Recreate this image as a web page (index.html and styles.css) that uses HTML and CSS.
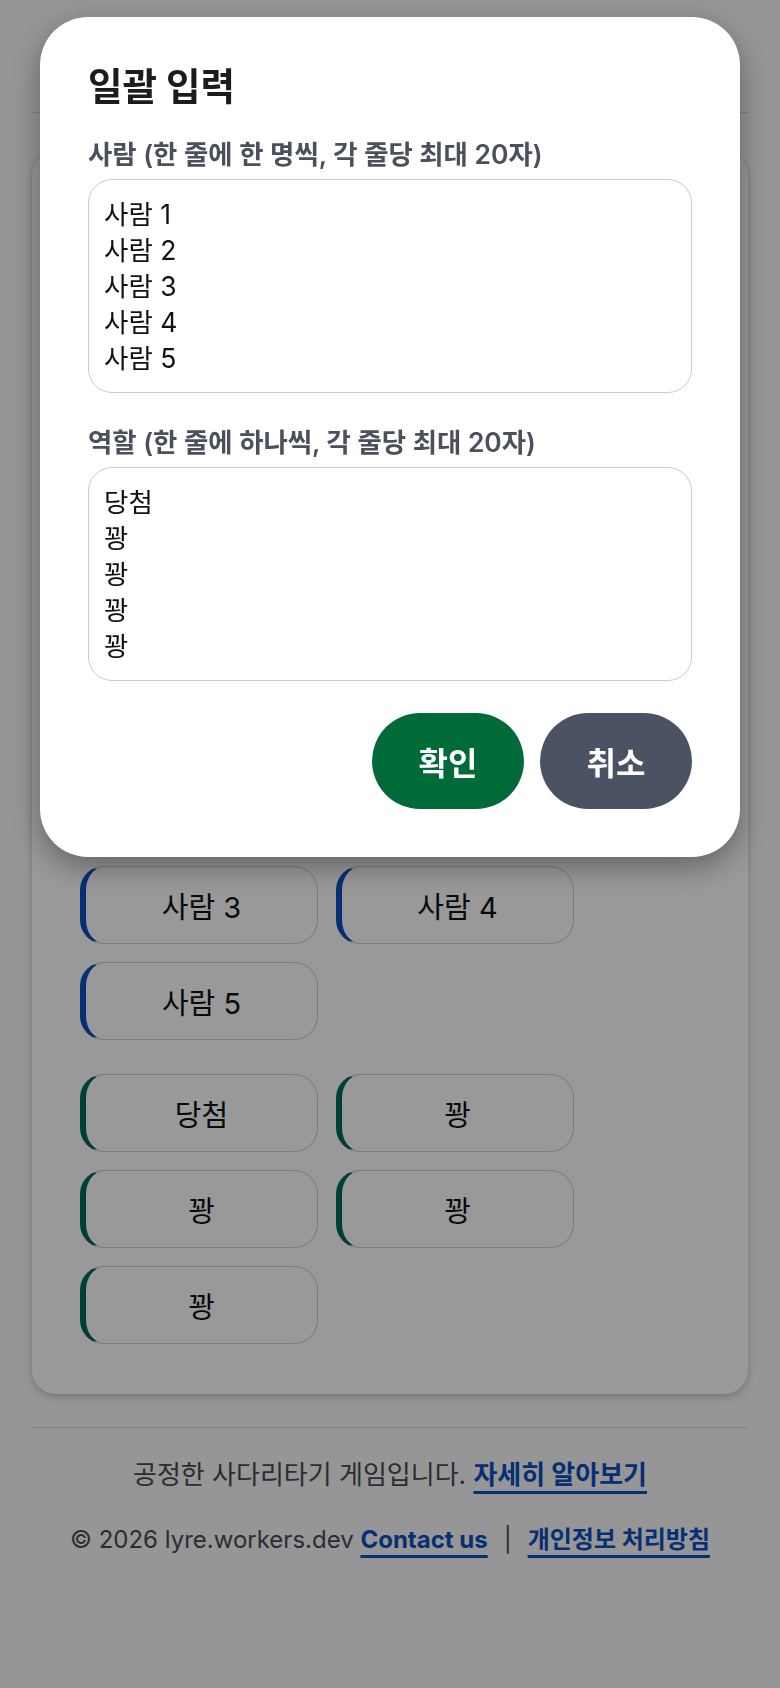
FILE: index.html
```html
<!DOCTYPE html>
<html lang="ko">
<head>
<meta charset="utf-8">
<meta name="viewport" content="width=device-width, initial-scale=1">
<title>사다리타기</title>
<link rel="stylesheet" href="styles.css">
</head>
<body>
<div class="page">
  <header class="site-header">
    <h1 class="site-title">사다리타기</h1>
  </header>

  <main class="card">
    <h2 class="card-title">참가자 설정</h2>
    <div class="toolbar">
      <button class="tool-btn">일괄 입력</button>
      <button class="tool-btn">사람 추가</button>
      <button class="tool-btn">역할 추가</button>
      <button class="tool-btn">사람 삭제</button>
      <button class="tool-btn">역할 삭제</button>
      <button class="tool-btn">초기화</button>
    </div>
    <div class="field">
      <span class="field-label">인원 수</span>
      <div class="field-input">5</div>
    </div>
    <h3 class="group-title">참가자</h3>

    <div class="chips">
      <div class="chip chip-person">사람 1</div>
      <div class="chip chip-person">사람 2</div>
      <div class="chip chip-person">사람 3</div>
      <div class="chip chip-person">사람 4</div>
      <div class="chip chip-person">사람 5</div>
    </div>

    <div class="chips chips-roles">
      <div class="chip chip-role">당첨</div>
      <div class="chip chip-role">꽝</div>
      <div class="chip chip-role">꽝</div>
      <div class="chip chip-role">꽝</div>
      <div class="chip chip-role">꽝</div>
    </div>
  </main>

  <footer class="site-footer">
    <p class="footer-line footer-line-main">공정한 사다리타기 게임입니다. <a class="footer-link" href="#">자세히 알아보기</a></p>
    <p class="footer-line">© 2026 lyre.workers.dev <a class="footer-link" href="#">Contact us</a><span class="sep">|</span><a class="footer-link" href="#">개인정보 처리방침</a></p>
  </footer>
</div>

<div class="overlay">
  <div class="modal" role="dialog" aria-labelledby="bulk-title">
    <h2 class="modal-title" id="bulk-title">일괄 입력</h2>
    <label class="modal-label" for="people">사람 (한 줄에 한 명씩, 각 줄당 최대 20자)</label>
    <textarea class="modal-textarea" id="people">사람 1
사람 2
사람 3
사람 4
사람 5</textarea>
    <label class="modal-label modal-label-second" for="roles">역할 (한 줄에 하나씩, 각 줄당 최대 20자)</label>
    <textarea class="modal-textarea" id="roles">당첨
꽝
꽝
꽝
꽝</textarea>
    <div class="modal-actions">
      <button class="btn btn-confirm">확인</button>
      <button class="btn btn-cancel">취소</button>
    </div>
  </div>
</div>
</body>
</html>
```

FILE: styles.css
```css
* {
  box-sizing: border-box;
}

html, body {
  margin: 0;
  padding: 0;
}

body {
  background: #fafafa;
  font-family: Inter, "Noto Sans CJK KR", "Noto Sans", sans-serif;
  color: #1a1a1a;
}

.page {
  padding: 0 32px 60px;
}

.site-header {
  height: 113px;
  border-bottom: 1px solid #d6d6e0;
  display: flex;
  align-items: center;
  justify-content: center;
}

.site-title {
  margin: 0;
  font-size: 36px;
  font-weight: 700;
}

.card {
  margin-top: 39px;
  background: #ffffff;
  border-radius: 24px;
  padding: 48px 48px 50px;
  box-shadow: 0 3px 8px rgba(0, 0, 0, 0.22);
}

.card-title {
  margin: 0 0 24px;
  font-size: 30px;
  line-height: 44px;
  font-weight: 700;
}

.toolbar {
  display: flex;
  flex-wrap: wrap;
  gap: 18px;
  width: 494px;
  margin-bottom: 34px;
}

.tool-btn {
  width: 238px;
  height: 78px;
  border: 1px solid #cfcfdb;
  border-radius: 24px;
  background: #ffffff;
  font: inherit;
  font-size: 24px;
}

.field {
  margin-bottom: 24px;
}

.field-label {
  display: block;
  font-size: 24px;
  line-height: 36px;
  margin-bottom: 8px;
}

.field-input {
  height: 78px;
  border: 1px solid #cfcfdb;
  border-radius: 22px;
  padding: 0 16px;
  font-size: 26px;
  line-height: 76px;
}

.group-title {
  margin: 0 0 16px;
  font-size: 24px;
  line-height: 36px;
  font-weight: 600;
}

.chips {
  display: flex;
  flex-wrap: wrap;
  gap: 18px;
  width: 494px;
}

.chips-roles {
  margin-top: 34px;
}

.chip {
  width: 238px;
  height: 78px;
  display: flex;
  align-items: center;
  justify-content: center;
  background: #ffffff;
  border: 1px solid #cfcfdb;
  border-left-width: 6px;
  border-radius: 24px;
  font-size: 29px;
  color: #111111;
}

.chip-person {
  border-left-color: #0b50c0;
}

.chip-role {
  border-left-color: #00695c;
}

.site-footer {
  margin-top: 33px;
  border-top: 1px solid #d6d6e0;
  padding-top: 28px;
  text-align: center;
  color: #4a4a55;
}

.footer-line {
  margin: 0;
  font-size: 24px;
  line-height: 36px;
}

.footer-line-main {
  font-size: 26px;
  line-height: 38px;
  margin-bottom: 28px;
}

.footer-link {
  color: #0b50c0;
  font-weight: 700;
  text-decoration: underline;
  text-decoration-thickness: 3px;
  text-underline-offset: 7px;
}

.sep {
  margin: 0 16px;
  color: #4a4a55;
}

/* Modal */
.overlay {
  position: fixed;
  inset: 0;
  background: rgba(0, 0, 0, 0.4);
  display: flex;
  justify-content: center;
  align-items: flex-start;
  padding-top: 17px;
}

.modal {
  width: 700px;
  background: #ffffff;
  border-radius: 48px;
  padding: 48px;
  box-shadow: 0 10px 30px rgba(0, 0, 0, 0.35);
  display: flex;
  flex-direction: column;
}

.modal-title {
  margin: 0 0 29px;
  font-size: 37.5px;
  line-height: 44px;
  font-weight: 700;
  color: #1c1c1e;
}

.modal-label {
  display: block;
  margin-bottom: 8px;
  font-size: 26.4px;
  line-height: 33px;
  font-weight: 600;
  color: #4b505c;
}

.modal-label-second {
  margin-top: 33px;
}

.modal-textarea {
  display: block;
  width: 100%;
  height: 214px;
  padding: 16px 15px 14px;
  border: 1px solid #c9c9d8;
  border-radius: 24px;
  font-family: inherit;
  font-size: 26.5px;
  line-height: 36px;
  color: #111111;
  background: #ffffff;
  resize: none;
  outline: none;
}

.modal-actions {
  margin-top: 32px;
  display: flex;
  justify-content: flex-end;
  gap: 16px;
}

.btn {
  width: 152px;
  height: 96px;
  border: none;
  border-radius: 48px;
  font-family: inherit;
  font-size: 32px;
  font-weight: 700;
  color: #ffffff;
  cursor: pointer;
}

.btn-confirm {
  background: #006b38;
}

.btn-cancel {
  background: #4a5263;
}
```
